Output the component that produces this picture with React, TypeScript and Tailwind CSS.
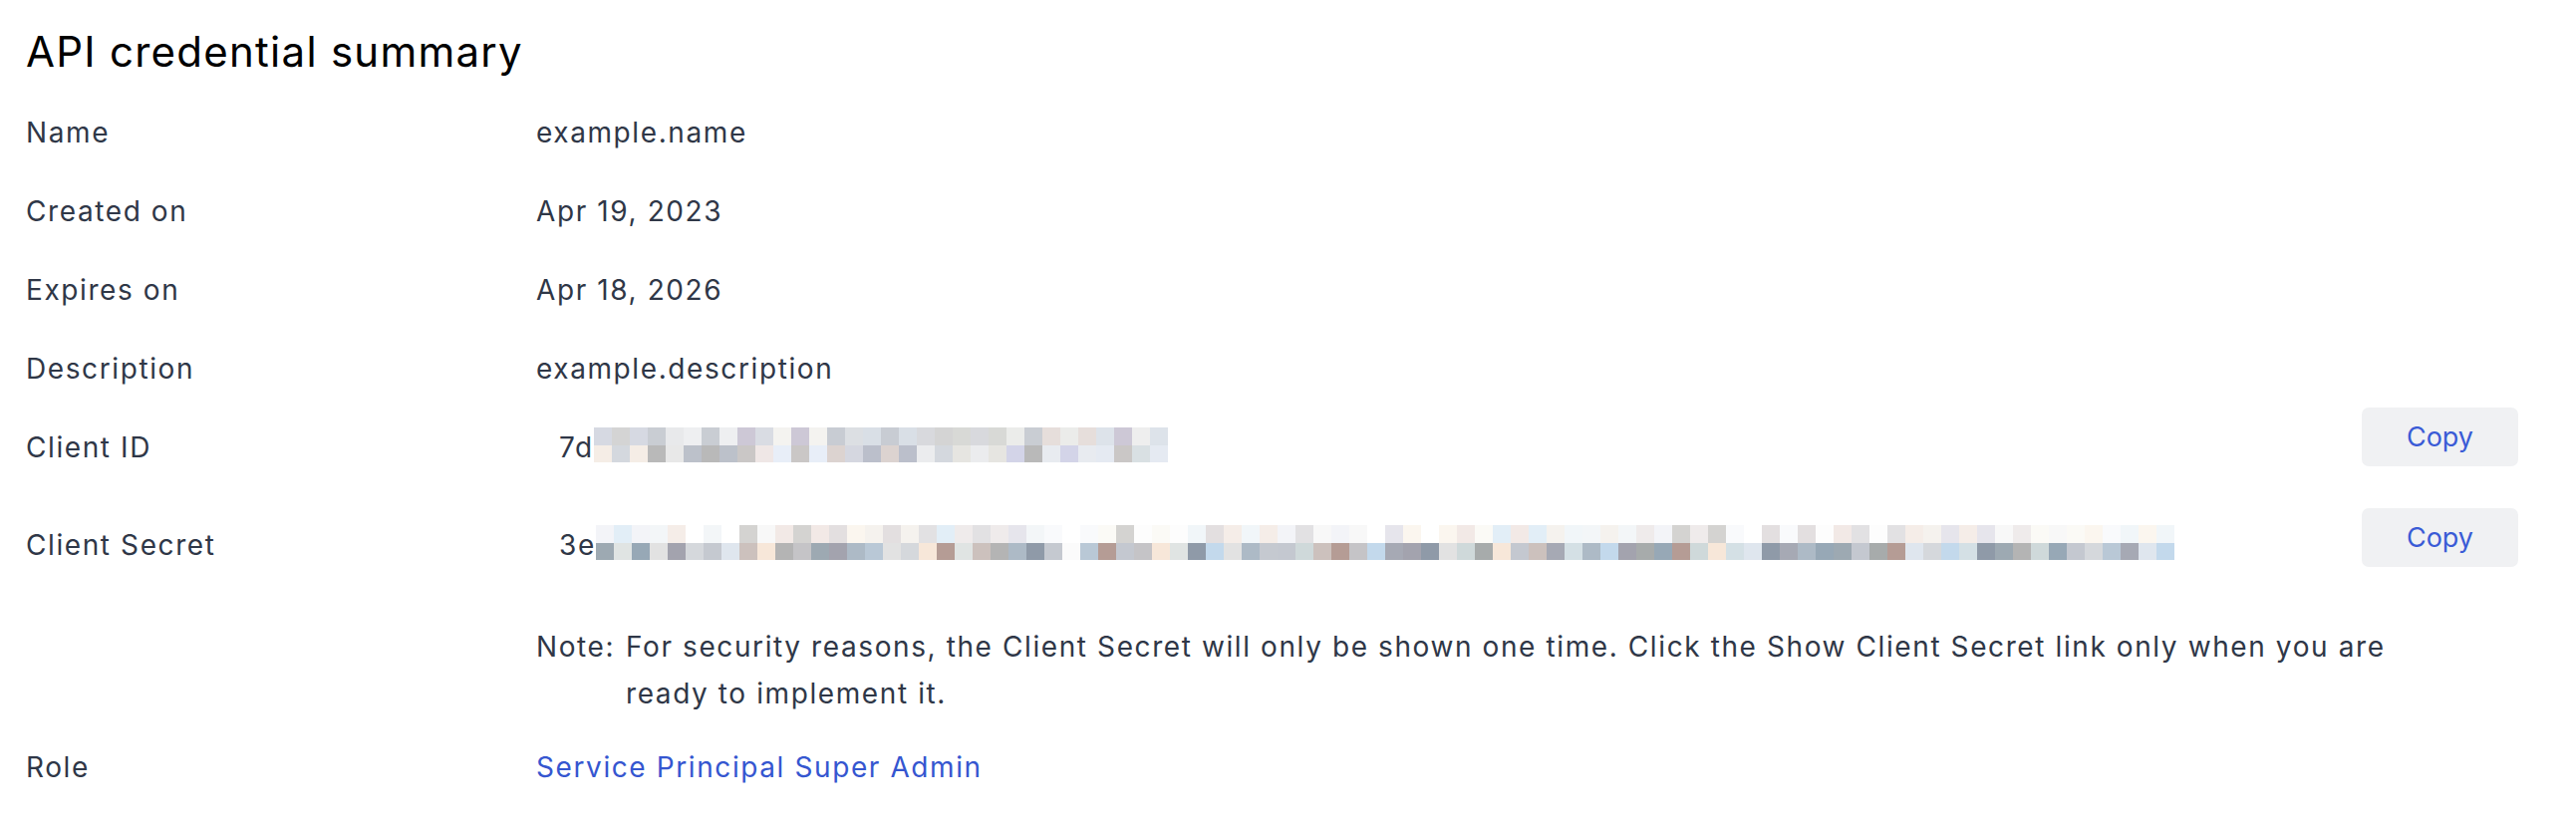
import React from 'react';

const idTop = [
  'bg-[#c8ccd3]', 'bg-[#cdc8d6]', 'bg-[#c9cdd3]', 'bg-[#d4d4d4]', 'bg-[#dcdfe3]', 'bg-[#d9dce3]',
  'bg-[#e8e9eb]', 'bg-[#eeeeee]', 'bg-[#e6dedb]', 'bg-[#d8d9d6]', 'bg-[#d9dfe6]', 'bg-[#f4f3f0]',
  'bg-[#eeeff1]', 'bg-[#d6d9e2]', 'bg-[#bcbecb]', 'bg-[#dde3ea]', 'bg-[#ebecea]', 'bg-[#d8d9dd]',
];
const idBottom = [
  'bg-[#e5eaf2]', 'bg-[#d3d4e8]', 'bg-[#ebecee]', 'bg-[#dcd3d0]', 'bg-[#cac7c6]', 'bg-[#b9b9b9]',
  'bg-[#d4d8de]', 'bg-[#d5d7e0]', 'bg-[#efe7e6]', 'bg-[#e8e8e8]', 'bg-[#d9e0e3]', 'bg-[#e8ebf0]',
  'bg-[#e6e5e1]', 'bg-[#bbbfcb]', 'bg-[#e8eef8]', 'bg-[#bcc1ca]', 'bg-[#f5ede6]', 'bg-[#a7b0bd]',
];
const secretTop = [
  'bg-[#f8f8f8]', 'bg-[#f5ede8]', 'bg-[#fdfdfd]', 'bg-[#f9fafc]', 'bg-[#efebeb]', 'bg-[#f5f2ee]',
  'bg-[#f2e9e6]', 'bg-[#ffffff]', 'bg-[#f3f4f8]', 'bg-[#f1f6f9]', 'bg-[#fbfaf6]', 'bg-[#e6e5ec]',
  'bg-[#e2e1e3]', 'bg-[#e3dfe0]', 'bg-[#d4d3d1]', 'bg-[#f3f6f8]', 'bg-[#e2eef7]', 'bg-[#fbf6ef]',
];
const secretBottom = [
  'bg-[#a6a9b4]', 'bg-[#b59c95]', 'bg-[#e2e2e2]', 'bg-[#b4b4b4]', 'bg-[#d4e0e5]', 'bg-[#c4c8d0]',
  'bg-[#a3a3ae]', 'bg-[#e0e4e3]', 'bg-[#dfe6ee]', 'bg-[#cfd9da]', 'bg-[#adbac6]', 'bg-[#c5c4c7]',
  'bg-[#d5d8dc]', 'bg-[#a7abab]', 'bg-[#8f9aa8]', 'bg-[#ccc1bd]', 'bg-[#b9c8d6]', 'bg-[#97a8b6]',
  'bg-[#c3d9ec]', 'bg-[#f7e7d9]', 'bg-[#c5c9d0]', 'bg-[#9da9b2]',
];

// stable "random" colour per cell
const pick = (list: string[], i: number, seed: number) => list[(i * 7 + seed * 13 + ((i * i) % 5)) % list.length];

const Mosaic = ({ cells, top, bottom, seed, gaps = [] }: { cells: number; top: string[]; bottom: string[]; seed: number; gaps?: number[] }) => (
  <div className="flex flex-col">
    <div className="flex">
      {Array.from({ length: cells }).map((_, i) => (
        <div key={i} className={`h-[18px] w-[18px] ${gaps.includes(i) ? 'bg-white' : pick(top, i, seed)}`} />
      ))}
    </div>
    <div className="flex">
      {Array.from({ length: cells }).map((_, i) => (
        <div key={i} className={`h-[17px] w-[18px] ${gaps.includes(i) ? 'bg-[#fbfbfb]' : pick(bottom, i, seed + 3)}`} />
      ))}
    </div>
  </div>
);

const CopyButton = () => (
  <button className="h-[59px] w-[157px] shrink-0 rounded-[7px] bg-[#f0f1f3] text-[27px] tracking-normal text-[#3a5bd6]">
    Copy
  </button>
);

const fields = [
  { label: 'Name', value: 'example.name' },
  { label: 'Created on', value: 'Apr 19, 2023' },
  { label: 'Expires on', value: 'Apr 18, 2026' },
  { label: 'Description', value: 'example.description' },
];

export default function App() {
  return (
    <div className="min-h-screen bg-white pl-[26px] pr-[58px] pt-[27px] font-['Inter',sans-serif] text-[28px] tracking-[0.057em] text-[#2f3747]">
      <h1 className="text-[42px] leading-[50px] font-normal tracking-[0.03em] text-black">API credential summary</h1>

      <div className="mt-[36px] flex flex-col gap-[39px] leading-[40px]">
        {fields.map(f => (
          <div key={f.label} className="flex">
            <div className="w-[512px] shrink-0">{f.label}</div>
            <div>{f.value}</div>
          </div>
        ))}
      </div>

      <div className="mt-[19px] flex items-start leading-[40px]">
        <div className="w-[512px] shrink-0 pt-[20px]">Client ID</div>
        <div className="flex flex-1 items-start pl-[23px] pt-[20px]">
          <span>7d</span>
          <Mosaic cells={32} top={idTop} bottom={idBottom} seed={1} />
        </div>
        <CopyButton />
      </div>

      <div className="mt-[41px] flex items-start leading-[40px]">
        <div className="w-[512px] shrink-0 pt-[17px]">Client Secret</div>
        <div className="flex flex-1 items-start pl-[23px] pt-[17px]">
          <span>3e</span>
          <Mosaic cells={88} top={secretTop} bottom={secretBottom} seed={2} gaps={[26]} />
        </div>
        <CopyButton />
      </div>

      <div className="mt-[57px] flex pl-[512px] leading-[47px]">
        <span className="w-[90px] shrink-0">Note:</span>
        <p className="w-[1840px]">
          For security reasons, the Client Secret will only be shown one time. Click the Show Client Secret link only when you are ready to implement it.
        </p>
      </div>

      <div className="mt-[30px] flex leading-[40px]">
        <div className="w-[512px] shrink-0">Role</div>
        <a href="#" className="text-[#3556d0]">Service Principal Super Admin</a>
      </div>
    </div>
  );
}
